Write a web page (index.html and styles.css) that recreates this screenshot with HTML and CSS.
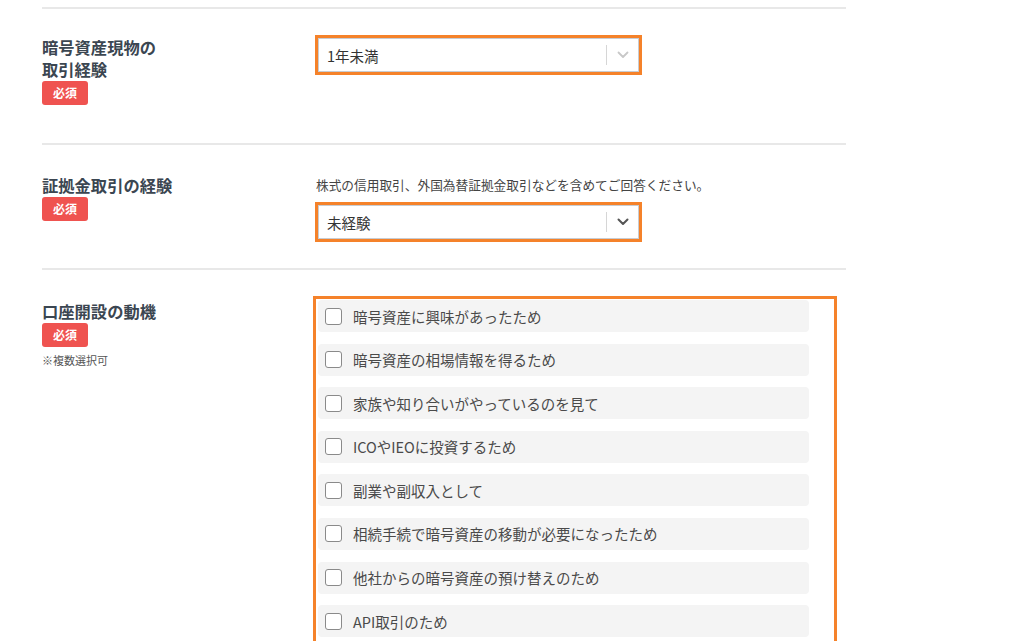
FILE: index.html
```html
<!DOCTYPE html>
<html lang="ja">
<head>
<meta charset="utf-8">
<title>口座開設</title>
<link rel="stylesheet" href="styles.css">
</head>
<body>
<main class="form">
  <section class="row row-a">
    <div class="label-col">
      <h3 class="label">暗号資産現物の<br>取引経験</h3>
      <span class="badge">必須</span>
    </div>
    <div class="field-col">
      <div class="select-wrap">
        <div class="select">
          <span class="value">1年未満</span>
          <span class="sep"></span>
          <span class="arrow arrow-light">
            <svg width="12" height="8" viewBox="0 0 12 8"><path d="M1.5 1.5 L6 6 L10.5 1.5" fill="none" stroke="currentColor" stroke-width="1.8" stroke-linecap="round" stroke-linejoin="round"/></svg>
          </span>
        </div>
      </div>
    </div>
  </section>

  <section class="row row-b">
    <div class="label-col">
      <h3 class="label">証拠金取引の経験</h3>
      <span class="badge">必須</span>
    </div>
    <div class="field-col">
      <p class="help">株式の信用取引、外国為替証拠金取引などを含めてご回答ください。</p>
      <div class="select-wrap">
        <div class="select">
          <span class="value">未経験</span>
          <span class="sep"></span>
          <span class="arrow arrow-dark">
            <svg width="12" height="8" viewBox="0 0 12 8"><path d="M1.5 1.5 L6 6 L10.5 1.5" fill="none" stroke="currentColor" stroke-width="2" stroke-linecap="round" stroke-linejoin="round"/></svg>
          </span>
        </div>
      </div>
    </div>
  </section>

  <section class="row row-c">
    <div class="label-col">
      <h3 class="label">口座開設の動機</h3>
      <span class="badge">必須</span>
      <p class="note">※複数選択可</p>
    </div>
    <div class="field-col">
      <div class="check-group">
        <label class="check"><span class="box"></span><span class="text">暗号資産に興味があったため</span></label>
        <label class="check"><span class="box"></span><span class="text">暗号資産の相場情報を得るため</span></label>
        <label class="check"><span class="box"></span><span class="text">家族や知り合いがやっているのを見て</span></label>
        <label class="check"><span class="box"></span><span class="text">ICOやIEOに投資するため</span></label>
        <label class="check"><span class="box"></span><span class="text">副業や副収入として</span></label>
        <label class="check"><span class="box"></span><span class="text">相続手続で暗号資産の移動が必要になったため</span></label>
        <label class="check"><span class="box"></span><span class="text">他社からの暗号資産の預け替えのため</span></label>
        <label class="check"><span class="box"></span><span class="text">API取引のため</span></label>
      </div>
    </div>
  </section>
</main>
</body>
</html>
```

FILE: styles.css
```css
* { box-sizing: border-box; }

html, body {
  margin: 0;
  padding: 0;
  background: #ffffff;
  font-family: "Noto Sans CJK JP", "Noto Sans", sans-serif;
  color: #333;
  overflow: hidden;
}

.form {
  width: 804px;
  margin-left: 42px;
  padding-top: 7px;
}

.row {
  display: grid;
  grid-template-columns: 271px 1fr;
  border-top: 2px solid #e8e8e8;
}

.row-a { height: 136px; padding-top: 26px; }
.row-b { height: 125px; padding-top: 29px; }
.row-c { padding-top: 26px; }

.label-col {
  display: flex;
  flex-direction: column;
  align-items: flex-start;
}

.row-a .label-col { padding-top: 1px; }
.row-c .label-col { padding-top: 4px; }

.label {
  margin: 0;
  font-size: 16.3px;
  line-height: 22px;
  font-weight: 700;
  color: #3b4651;
}

.badge {
  display: inline-flex;
  align-items: center;
  justify-content: center;
  width: 46px;
  height: 24px;
  margin-top: 1px;
  background: #ef5350;
  color: #fff;
  font-size: 12px;
  font-weight: 700;
  border-radius: 3px;
  line-height: 1;
}

.note {
  margin: 5px 0 0;
  font-size: 11px;
  line-height: 16px;
  color: #555;
}

.field-col {
  display: flex;
  flex-direction: column;
  align-items: flex-start;
}

.help {
  margin: 2px 0 8px 3px;
  font-size: 12.7px;
  line-height: 18px;
  color: #444;
}

.select-wrap {
  margin-left: 2px;
  width: 327px;
  border: 3px solid #f5822a;
}

.select {
  display: flex;
  align-items: center;
  height: 34px;
  border: 1px solid #c8ccd2;
  background: #fff;
  padding-left: 8px;
}

.value {
  flex: 1;
  font-size: 14.5px;
  color: #333;
}

.sep {
  width: 1px;
  height: 20px;
  background: #d6d6d6;
}

.arrow {
  width: 31px;
  display: flex;
  align-items: center;
  justify-content: center;
}

.arrow-light { color: #c8c8c8; }
.arrow-dark { color: #555; }

.check-group {
  width: 524px;
  height: 360px;
  border: 3px solid #f5822a;
  padding: 1px 25px 0 2px;
  display: flex;
  flex-direction: column;
  gap: 11.6px;
}

.check {
  display: flex;
  align-items: center;
  height: 32px;
  flex: none;
  background: #f4f4f4;
  border-radius: 4px;
  padding-left: 7px;
}

.box {
  width: 17px;
  height: 17px;
  border: 1.5px solid #8a8a8a;
  border-radius: 3px;
  background: #fff;
  flex: none;
}

.text {
  margin-left: 11px;
  font-size: 14.5px;
  color: #4a4a4a;
}
```
